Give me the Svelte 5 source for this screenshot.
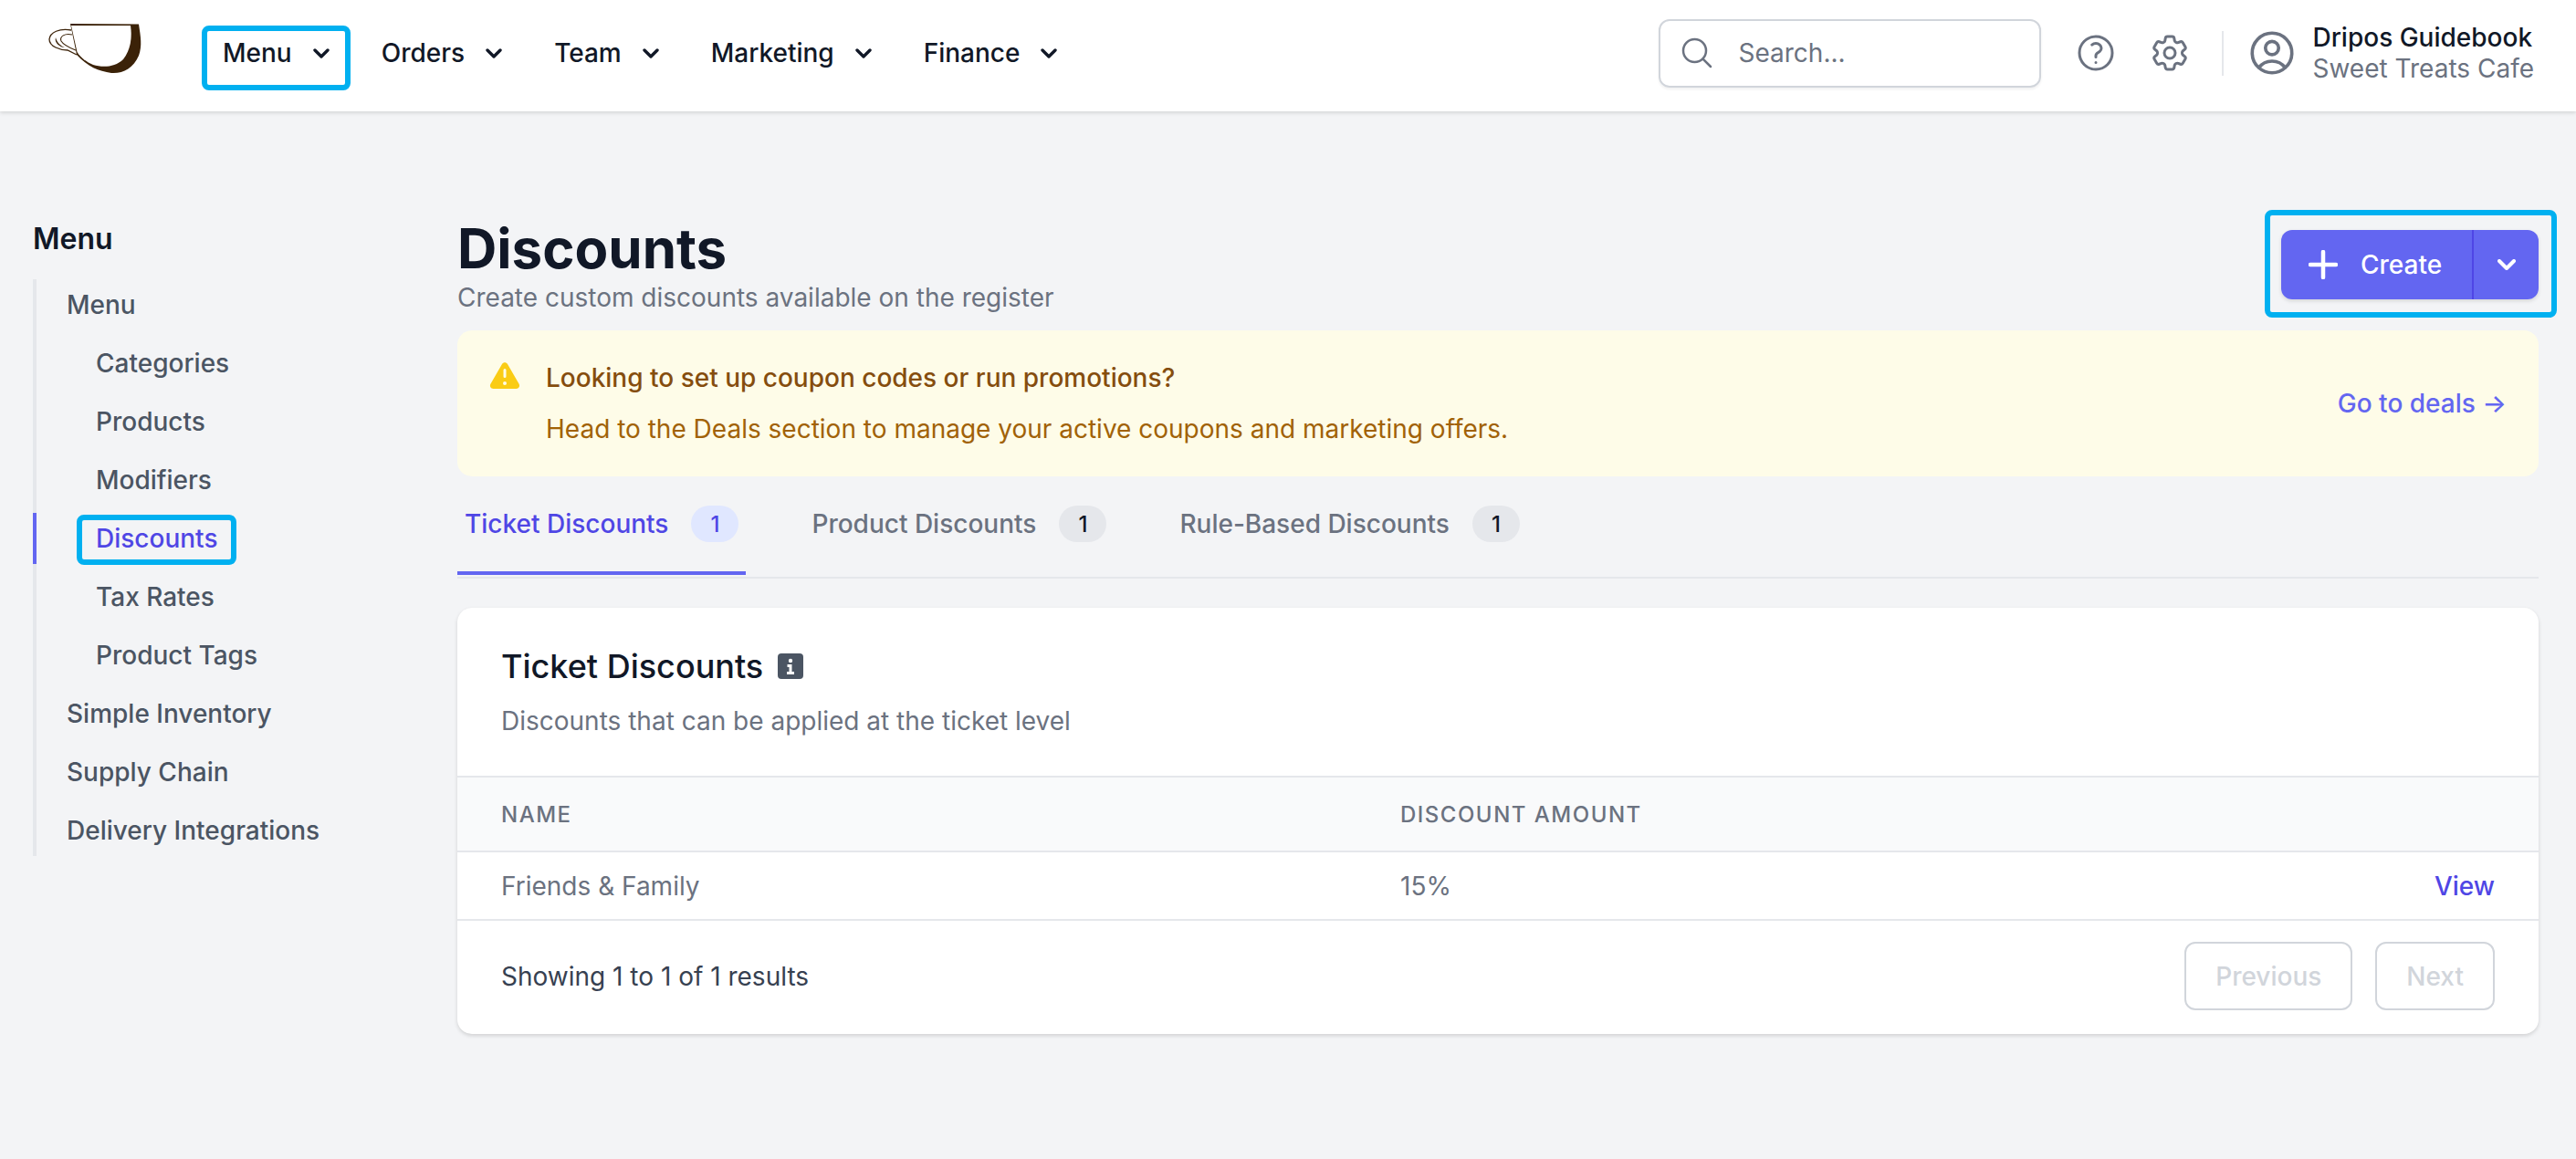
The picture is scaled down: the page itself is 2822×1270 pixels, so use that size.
<script>
  const navItems = ['Menu', 'Orders', 'Team', 'Marketing', 'Finance'];

  const sideItems = [
    { label: 'Menu', sub: false },
    { label: 'Categories', sub: true },
    { label: 'Products', sub: true },
    { label: 'Modifiers', sub: true },
    { label: 'Discounts', sub: true, active: true },
    { label: 'Tax Rates', sub: true },
    { label: 'Product Tags', sub: true },
    { label: 'Simple Inventory', sub: false },
    { label: 'Supply Chain', sub: false },
    { label: 'Delivery Integrations', sub: false }
  ];

  const tabs = [
    { label: 'Ticket Discounts', count: 1, active: true },
    { label: 'Product Discounts', count: 1 },
    { label: 'Rule-Based Discounts', count: 1 }
  ];
</script>

<header class="nav">
  <svg class="logo" viewBox="23 19 104 68" aria-label="Dripos">
    <path fill="#3b2208" d="M47 21 L122 21.5 C124 35 126 45 122 56 C116 70 104 76 92 75 C78 73 66 68 54 55 Z" />
    <path fill="#fff" d="M48 23 L113 23 C115 36 113 50 105 60 C96 69 82 69 72 66 C65 63 58 58 54.5 52 Z" />
    <path fill="none" stroke="#3b2208" stroke-width="1.3" d="M48 28 C35 26 25 30 24 38 C24 46 36 50 44 50 L54 55" />
    <path fill="none" stroke="#3b2208" stroke-width="1.1" d="M49 33 C41 31 35 35 37 40 C40 45 48 48 53 50" />
    <path fill="#3b2208" d="M31 36 C32 41 36 45 41 47 C36 47 29 42 31 36 Z" />
  </svg>

  <nav class="nav-links">
    {#each navItems as item, i}
      <span class="nav-link">
        {item}
        <svg class="chev" viewBox="0 0 18 11"><path d="M2 2l7 7 7-7" /></svg>
        {#if i === 0}<span class="mark mark-nav"></span>{/if}
      </span>
    {/each}
  </nav>

  <div class="nav-right">
    <div class="search">
      <svg class="ico search-ico" viewBox="0 0 24 24"><path d="m21 21-5.197-5.197m0 0A7.5 7.5 0 1 0 5.196 5.196a7.5 7.5 0 0 0 10.607 10.607Z" /></svg>
      <span>Search...</span>
    </div>
    <svg class="ico ico-lg" viewBox="0 0 24 24"><path d="M9.879 7.519c1.171-1.025 3.071-1.025 4.242 0 1.172 1.025 1.172 2.687 0 3.712-.203.179-.43.326-.67.442-.745.361-1.45.999-1.45 1.827v.75M21 12a9 9 0 1 1-18 0 9 9 0 0 1 18 0Zm-9 5.25h.008v.008H12v-.008Z" /></svg>
    <svg class="ico ico-lg" viewBox="0 0 24 24"><path d="M9.594 3.94c.09-.542.56-.94 1.11-.94h2.593c.55 0 1.02.398 1.11.94l.213 1.281c.063.374.313.686.645.87.074.04.147.083.22.127.325.196.72.257 1.075.124l1.217-.456a1.125 1.125 0 0 1 1.37.49l1.296 2.247a1.125 1.125 0 0 1-.26 1.431l-1.003.827c-.293.241-.438.613-.43.992a7.723 7.723 0 0 1 0 .255c-.008.378.137.75.43.991l1.004.827c.424.35.534.955.26 1.43l-1.298 2.247a1.125 1.125 0 0 1-1.369.491l-1.217-.456c-.355-.133-.75-.072-1.076.124a6.47 6.47 0 0 1-.22.128c-.331.183-.581.495-.644.869l-.213 1.281c-.09.543-.56.94-1.11.94h-2.594c-.55 0-1.019-.398-1.11-.94l-.213-1.281c-.062-.374-.312-.686-.644-.87a6.52 6.52 0 0 1-.22-.127c-.325-.196-.72-.257-1.076-.124l-1.217.456a1.125 1.125 0 0 1-1.369-.49l-1.297-2.247a1.125 1.125 0 0 1 .26-1.431l1.004-.827c.292-.24.437-.613.43-.991a6.932 6.932 0 0 1 0-.255c.007-.38-.138-.751-.43-.992l-1.004-.827a1.125 1.125 0 0 1-.26-1.43l1.297-2.247a1.125 1.125 0 0 1 1.37-.491l1.216.456c.356.133.751.072 1.076-.124.072-.044.146-.086.22-.128.332-.183.582-.495.644-.869l.214-1.28Z" /><path d="M15 12a3 3 0 1 1-6 0 3 3 0 0 1 6 0Z" /></svg>
    <div class="nav-divider"></div>
    <svg class="ico ico-user" viewBox="0 0 24 24"><path d="M17.982 18.725A7.488 7.488 0 0 0 12 15.75a7.488 7.488 0 0 0-5.982 2.975m11.963 0a9 9 0 1 0-11.963 0m11.963 0A8.966 8.966 0 0 1 12 21a8.966 8.966 0 0 1-5.982-2.275M15 9.75a3 3 0 1 1-6 0 3 3 0 0 1 6 0Z" /></svg>
    <div class="account">
      <div class="account-name">Dripos Guidebook</div>
      <div class="account-shop">Sweet Treats Cafe</div>
    </div>
  </div>
</header>

<div class="page">
  <aside class="side">
    <h2>Menu</h2>
    <ul>
      {#each sideItems as item}
        <li class:active={item.active} class:sub={item.sub}>
          <span class="side-label">
            {item.label}
            {#if item.active}<span class="mark mark-side"></span>{/if}
          </span>
        </li>
      {/each}
    </ul>
  </aside>

  <main class="main">
    <div class="head">
      <div>
        <h1>Discounts</h1>
        <p>Create custom discounts available on the register</p>
      </div>
      <div class="split">
        <button class="split-main" type="button">
          <svg class="plus" viewBox="0 0 32 32"><path d="M16 2v28M2 16h28" /></svg>
          Create
        </button>
        <button class="split-more" type="button" aria-label="More">
          <svg viewBox="0 0 20 12"><path d="M2 2l8 8 8-8" /></svg>
        </button>
        <span class="mark mark-create"></span>
      </div>
    </div>

    <div class="banner">
      <svg class="warn" viewBox="0 0 20 20"><path fill-rule="evenodd" d="M8.485 2.495c.673-1.167 2.357-1.167 3.03 0l6.28 10.875c.673 1.167-.17 2.625-1.516 2.625H3.72c-1.347 0-2.189-1.458-1.515-2.625L8.485 2.495ZM10 5a.75.75 0 0 1 .75.75v3.5a.75.75 0 0 1-1.5 0v-3.5A.75.75 0 0 1 10 5Zm0 9a1 1 0 1 0 0-2 1 1 0 0 0 0 2Z" /></svg>
      <div class="banner-text">
        <div class="banner-title">Looking to set up coupon codes or run promotions?</div>
        <div class="banner-sub">Head to the Deals section to manage your active coupons and marketing offers.</div>
      </div>
      <span class="banner-link">Go to deals →</span>
    </div>

    <div class="tabs">
      {#each tabs as tab}
        <div class="tab" class:active={tab.active}>
          {tab.label}
          <span class="count">{tab.count}</span>
        </div>
      {/each}
    </div>

    <section class="card">
      <div class="card-head">
        <div class="card-title">
          Ticket Discounts
          <svg class="info" viewBox="0 0 28 28">
            <rect width="28" height="28" rx="4" fill="#4b5563" />
            <circle cx="14" cy="8" r="2.2" fill="#fff" />
            <path fill="#fff" d="M10.5 12h5v8h2.5v3H10v-3h2.5v-5h-2Z" />
          </svg>
        </div>
        <div class="card-sub">Discounts that can be applied at the ticket level</div>
      </div>

      <table>
        <thead>
          <tr><th class="col-name">Name</th><th>Discount Amount</th><th class="col-act"></th></tr>
        </thead>
        <tbody>
          <tr><td class="col-name">Friends &amp; Family</td><td>15%</td><td class="col-act view">View</td></tr>
        </tbody>
      </table>

      <div class="card-foot">
        <span class="results">Showing 1 to 1 of 1 results</span>
        <div class="pager">
          <button type="button" disabled>Previous</button>
          <button type="button" disabled>Next</button>
        </div>
      </div>
    </section>
  </main>
</div>

<style>
  :global(body) {
    margin: 0;
    background: #f3f4f6;
    font-family: Inter, "Liberation Sans", sans-serif;
    font-size: 28px;
    min-height: 1270px;
    overflow: hidden;
  }

  .nav {
    display: flex;
    align-items: center;
    height: 116px;
    padding: 0 46px 6px 53px;
    background: #fff;
    box-shadow: 0 2px 4px rgba(0, 0, 0, 0.12);
    position: relative;
  }

  .logo {
    width: 104px;
    height: 68px;
    margin-right: 87px;
    flex-shrink: 0;
  }

  .nav-links {
    display: flex;
    gap: 57px;
  }

  .nav-link {
    position: relative;
    display: flex;
    align-items: center;
    gap: 23px;
    height: 40px;
    font-weight: 500;
    color: #111827;
    white-space: nowrap;
  }

  .chev {
    width: 18px;
    height: 11px;
    fill: none;
    stroke: #111827;
    stroke-width: 3.4;
    stroke-linecap: round;
    stroke-linejoin: round;
  }

  .mark {
    position: absolute;
    border: 6px solid #00b0f0;
    border-radius: 8px;
    pointer-events: none;
  }

  .mark-nav {
    left: -23px;
    right: -23px;
    top: -10px;
    bottom: -21px;
  }

  .mark-side {
    left: -21px;
    right: -21px;
    top: -9px;
    bottom: -12px;
  }

  .mark-create {
    left: -18px;
    right: -20px;
    top: -22px;
    bottom: -20px;
  }

  .nav-right {
    display: flex;
    align-items: center;
    margin-left: auto;
  }

  .search {
    display: flex;
    align-items: center;
    box-sizing: border-box;
    width: 419px;
    height: 75px;
    padding-left: 20px;
    gap: 25px;
    border: 2px solid #d1d5db;
    border-radius: 12px;
    box-shadow: 0 2px 3px rgba(0, 0, 0, 0.06);
    color: #6b7280;
    margin-right: 36px;
  }

  .ico {
    fill: none;
    stroke: #6b7280;
    stroke-width: 1.5;
    stroke-linecap: round;
    stroke-linejoin: round;
    flex-shrink: 0;
  }

  .search-ico {
    width: 40px;
    height: 40px;
  }

  .ico-lg {
    width: 48px;
    height: 48px;
    margin-right: 33px;
  }

  .ico-user {
    width: 58px;
    height: 58px;
    margin-right: 15px;
  }

  .nav-divider {
    width: 2px;
    height: 49px;
    background: #e5e7eb;
    margin-right: 24px;
  }

  .account-name {
    font-weight: 500;
    color: #111827;
    line-height: 34px;
  }

  .account-shop {
    color: #6b7280;
    line-height: 34px;
  }

  .page {
    display: flex;
  }

  .side {
    box-sizing: border-box;
    width: 501px;
    padding: 120px 0 0 36px;
    flex-shrink: 0;
  }

  .side h2 {
    margin: 0 0 24px;
    font-size: 32px;
    line-height: 40px;
    font-weight: 600;
    color: #111827;
  }

  .side ul {
    display: flex;
    flex-direction: column;
    gap: 8px;
    list-style: none;
    margin: 0;
    padding: 0;
    box-shadow: inset 4px 0 0 #e5e7eb;
    width: 400px;
  }

  .side li {
    display: flex;
    align-items: center;
    height: 56px;
    padding-left: 33px;
    border-left: 4px solid transparent;
    color: #4b5563;
    font-weight: 500;
  }

  .side li.sub {
    padding-left: 65px;
  }

  .side li.active {
    border-left-color: #6366f1;
    color: #4f46e5;
  }

  .side-label {
    position: relative;
    white-space: nowrap;
  }

  .main {
    box-sizing: border-box;
    width: 2280px;
    padding-top: 114px;
  }

  .head {
    display: flex;
    align-items: center;
    justify-content: space-between;
    height: 108px;
    margin-bottom: 18px;
  }

  .head h1 {
    margin: 0;
    font-size: 60px;
    line-height: 72px;
    font-weight: 700;
    color: #111827;
  }

  .head p {
    margin: 0;
    line-height: 36px;
    color: #6b7280;
  }

  .split {
    position: relative;
    display: flex;
    height: 76px;
    border-radius: 12px;
    box-shadow: 0 2px 4px rgba(0, 0, 0, 0.12);
  }

  .split button {
    border: 0;
    background: #6366f1;
    color: #fff;
    font: inherit;
    font-weight: 500;
    padding: 0;
    display: flex;
    align-items: center;
  }

  .split-main {
    width: 209px;
    padding-left: 30px !important;
    gap: 25px;
    border-radius: 12px 0 0 12px;
  }

  .plus {
    width: 32px;
    height: 32px;
    fill: none;
    stroke: #fff;
    stroke-width: 4.5;
    stroke-linecap: round;
  }

  .split-more {
    width: 73px;
    justify-content: center;
    border-left: 2px solid #4f46e5 !important;
    border-radius: 0 12px 12px 0;
  }

  .split-more svg {
    width: 20px;
    height: 12px;
    fill: none;
    stroke: #fff;
    stroke-width: 4;
    stroke-linecap: round;
    stroke-linejoin: round;
  }

  .banner {
    display: flex;
    align-items: center;
    box-sizing: border-box;
    height: 160px;
    padding: 0 35px 0 32px;
    background: #fefce8;
    border-radius: 16px;
  }

  .warn {
    width: 40px;
    height: 40px;
    fill: #facc15;
    align-self: flex-start;
    margin: 32px 25px 0 0;
    flex-shrink: 0;
  }

  .banner-text {
    flex: 1;
    display: flex;
    flex-direction: column;
    gap: 16px;
    line-height: 40px;
  }

  .banner-title {
    font-weight: 500;
    color: #854d0e;
  }

  .banner-sub {
    color: #a16207;
  }

  .banner-link {
    color: #6366f1;
    font-weight: 500;
  }

  .tabs {
    display: flex;
    gap: 64px;
    border-bottom: 2px solid #e5e7eb;
  }

  .tab {
    display: flex;
    align-items: center;
    gap: 25px;
    height: 40px;
    padding: 32px 8px;
    margin-bottom: 2px;
    border-bottom: 4px solid transparent;
    color: #6b7280;
    font-weight: 500;
    white-space: nowrap;
  }

  .tab.active {
    color: #4f46e5;
    border-bottom-color: #6366f1;
  }

  .count {
    display: flex;
    align-items: center;
    justify-content: center;
    width: 52px;
    height: 40px;
    border-radius: 20px;
    background: #e5e7eb;
    color: #111827;
    font-size: 24px;
  }

  .tab.active .count {
    background: #e0e7ff;
    color: #4f46e5;
  }

  .card {
    margin-top: 32px;
    background: #fff;
    border-radius: 16px;
    box-shadow: 0 2px 4px rgba(0, 0, 0, 0.14);
    overflow: hidden;
  }

  .card-head {
    box-sizing: border-box;
    height: 184px;
    padding: 42px 48px 0;
  }

  .card-title {
    display: flex;
    align-items: center;
    gap: 16px;
    font-size: 36px;
    line-height: 44px;
    font-weight: 500;
    color: #111827;
  }

  .info {
    width: 28px;
    height: 28px;
  }

  .card-sub {
    margin-top: 18px;
    line-height: 40px;
    color: #6b7280;
  }

  table {
    width: 100%;
    table-layout: fixed;
    border-collapse: collapse;
  }

  th {
    height: 80px;
    padding: 0;
    background: #f9fafb;
    border-top: 2px solid #e5e7eb;
    border-bottom: 2px solid #e5e7eb;
    text-align: left;
    font-size: 24px;
    font-weight: 500;
    letter-spacing: 1.5px;
    text-transform: uppercase;
    color: #6b7280;
  }

  td {
    height: 73px;
    padding: 0;
    border-bottom: 2px solid #e5e7eb;
    color: #6b7280;
  }

  .col-name {
    width: 985px;
    padding-left: 48px;
  }

  .col-act {
    width: 200px;
    padding-right: 48px;
    text-align: right;
  }

  .view {
    color: #4f46e5;
    font-weight: 500;
  }

  .card-foot {
    display: flex;
    align-items: center;
    justify-content: space-between;
    height: 124px;
    padding: 0 48px 3px;
    box-sizing: border-box;
  }

  .results {
    color: #374151;
  }

  .pager {
    display: flex;
    gap: 25px;
  }

  .pager button {
    height: 75px;
    padding: 0 32px;
    background: #fff;
    border: 2px solid #d1d5db;
    border-radius: 12px;
    font: inherit;
    font-weight: 500;
    color: #d1d5db;
  }
</style>
